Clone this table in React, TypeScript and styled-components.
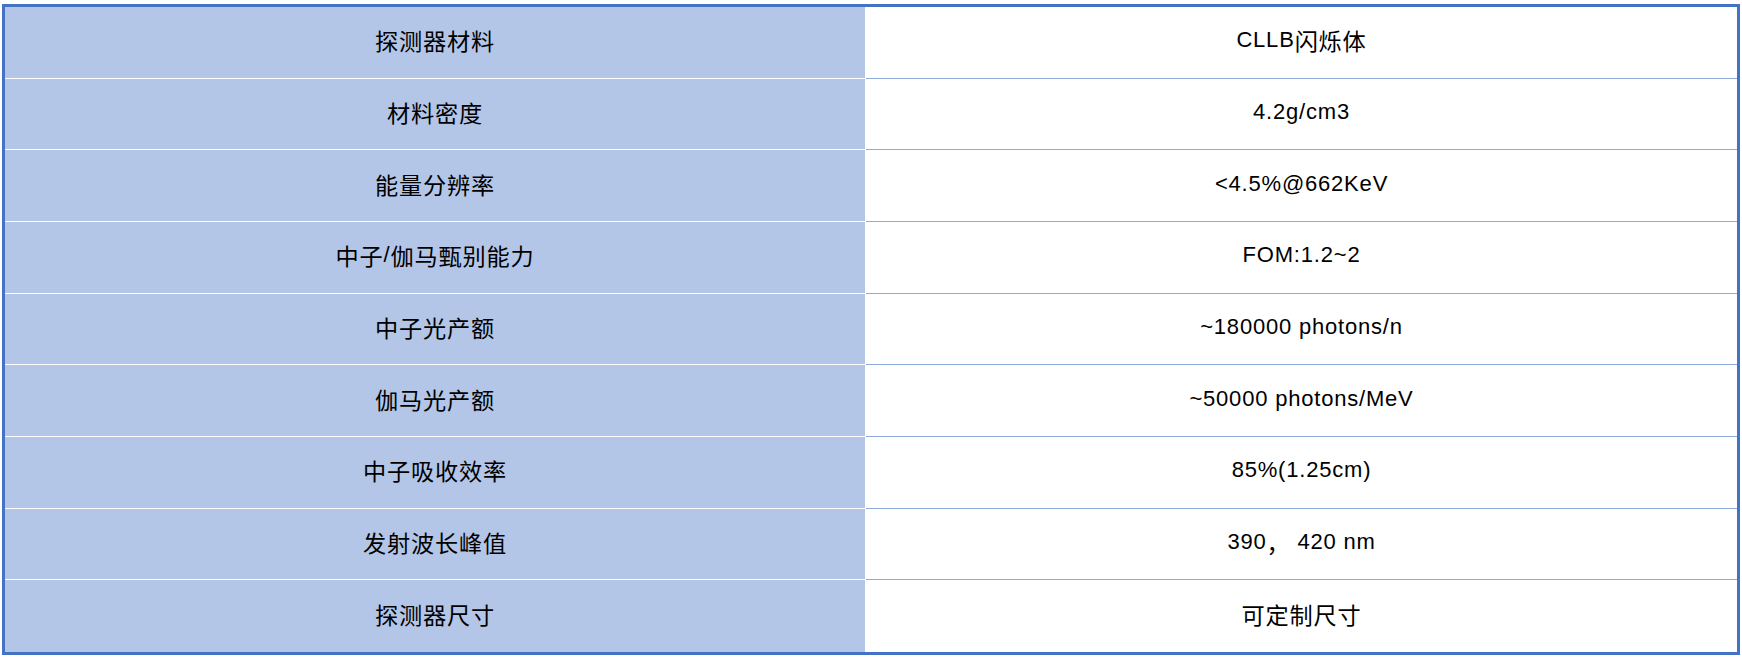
import React from "react";
import styled, { createGlobalStyle } from "styled-components";

const Global = createGlobalStyle`
  html, body { margin: 0; padding: 0; background: #ffffff; }
  body { font-family: "Liberation Sans", Arial, "Noto Sans CJK SC", sans-serif; }
`;

const Page = styled.div`
  padding: 4px 2px 2px 2px;
`;

const Table = styled.div`
  box-sizing: border-box;
  width: 1738px;
  height: 651px;
  border: 3px solid #4472c4;
  display: flex;
  flex-direction: column;
  background: #ffffff;
`;

const Row = styled.div`
  flex: 1 1 0;
  display: flex;
  min-height: 0;
`;

const Cell = styled.div<{ $head?: boolean; $last?: boolean }>`
  box-sizing: border-box;
  display: flex;
  align-items: center;
  justify-content: center;
  width: ${(p) => (p.$head ? "860px" : "871px")};
  margin-left: ${(p) => (p.$head ? "0" : "1px")};
  background: ${(p) => (p.$head ? "#b4c6e7" : "#ffffff")};
  border-bottom: ${(p) =>
    p.$last ? "none" : p.$head ? "1px solid #ffffff" : "1px solid #8eaadb"};
  color: #000000;
  font-family: "Liberation Sans", Arial, "Noto Sans CJK SC", sans-serif;
  font-size: 22px;
  letter-spacing: 0.8px;
  white-space: pre;
  padding-bottom: 4px;
`;

const Cjk = styled.span`
  font-family: "Noto Sans CJK SC", sans-serif;
  font-size: 23.2px;
  letter-spacing: 0.8px;
`;

const rows: [string, string][] = [
  ["探测器材料", "CLLB闪烁体"],
  ["材料密度", "4.2g/cm3"],
  ["能量分辨率", "<4.5%@662KeV"],
  ["中子/伽马甄别能力", "FOM:1.2~2"],
  ["中子光产额", "~180000 photons/n"],
  ["伽马光产额", "~50000 photons/MeV"],
  ["中子吸收效率", "85%(1.25cm)"],
  ["发射波长峰值", "390， 420 nm"],
  ["探测器尺寸", "可定制尺寸"],
];

function Mixed({ text }: { text: string }) {
  const parts = text.match(/[\u3000-\u9fff\uff00-\uffef]+|[^\u3000-\u9fff\uff00-\uffef]+/g) || [];
  return (
    <>
      {parts.map((p, i) =>
        /[\u3000-\u9fff\uff00-\uffef]/.test(p) ? <Cjk key={i}>{p}</Cjk> : <span key={i}>{p}</span>
      )}
    </>
  );
}

export default function App() {
  return (
    <Page>
      <Global />
      <Table>
        {rows.map(([k, v], i) => (
          <Row key={i}>
            <Cell $head $last={i === rows.length - 1}>
              <Mixed text={k} />
            </Cell>
            <Cell $last={i === rows.length - 1}>
              <Mixed text={v} />
            </Cell>
          </Row>
        ))}
      </Table>
    </Page>
  );
}
